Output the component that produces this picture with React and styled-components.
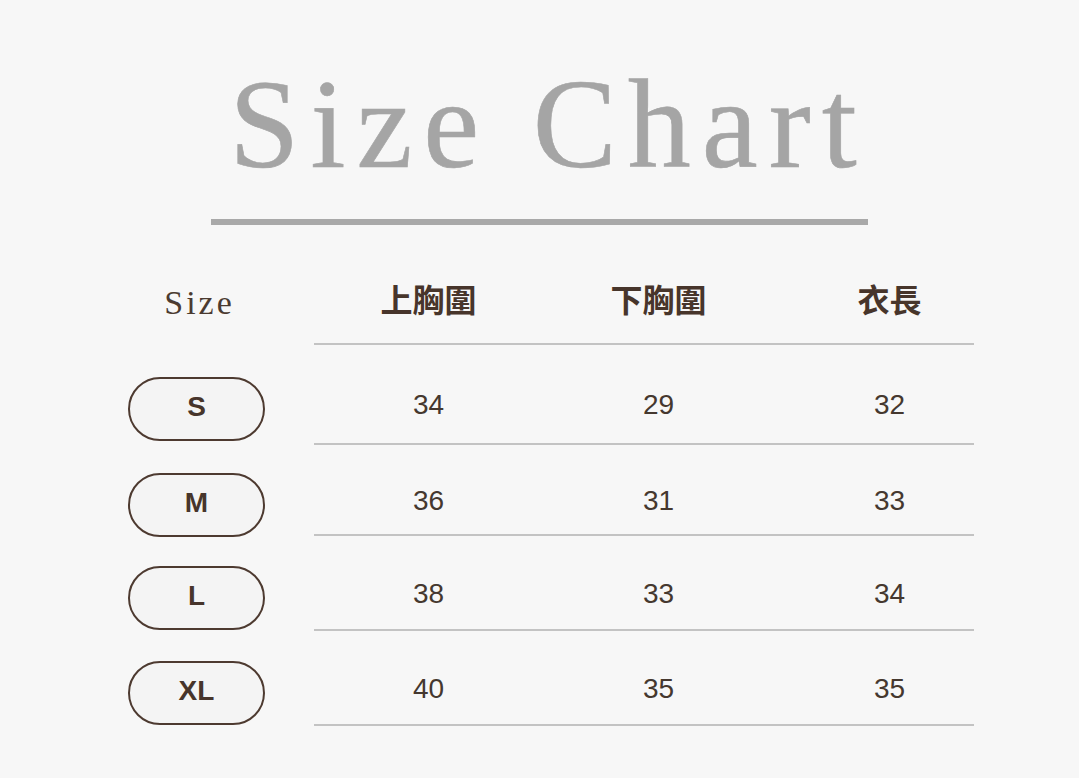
import React from "react";
import styled, { createGlobalStyle } from "styled-components";

const rows = [
  { size: "S", values: [34, 29, 32], h: 100 },
  { size: "M", values: [36, 31, 33], h: 91 },
  { size: "L", values: [38, 33, 34], h: 95 },
  { size: "XL", values: [40, 35, 35], h: 95 },
];

const headers = ["上胸圍", "下胸圍", "衣長"];

const App = () => {
  return (
    <Page>
      <GlobalStyle />
      <Title>Size Chart</Title>
      <TitleBar />
      <Table>
        <HeadRow>
          <SizeHead>Size</SizeHead>
          <DataGroup>
            {headers.map((h) => (
              <HeadCell key={h}>{h}</HeadCell>
            ))}
          </DataGroup>
        </HeadRow>
        {rows.map((row) => (
          <Row key={row.size} $h={row.h}>
            <SizeCell>
              <Pill>{row.size}</Pill>
            </SizeCell>
            <DataGroup>
              {row.values.map((v, i) => (
                <NumCell key={i}>{v}</NumCell>
              ))}
            </DataGroup>
          </Row>
        ))}
      </Table>
    </Page>
  );
};

export default App;

const GlobalStyle = createGlobalStyle`
  html, body {
    margin: 0;
    padding: 0;
    background: #f7f7f7;
  }
  body {
    font-family: "Liberation Sans", Arial, sans-serif;
  }
`;

const Page = styled.div`
  width: 1079px;
  height: 778px;
  padding-top: 62px;
  box-sizing: border-box;
  background: #f7f7f7;
  overflow: hidden;
`;

const Title = styled.h1`
  margin: 0;
  padding-left: 18px;
  text-align: center;
  font-family: "Liberation Serif", "Times New Roman", serif;
  font-weight: 400;
  font-size: 126px;
  line-height: 1;
  letter-spacing: 11px;
  color: #a5a5a5;
  -webkit-text-stroke: 0.6px #a5a5a5;
`;

const TitleBar = styled.div`
  width: 657px;
  height: 6px;
  margin: 31px auto 0;
  background: #a9a9a9;
`;

const Table = styled.div`
  margin: 32px 0 0 81px;
  display: flex;
  flex-direction: column;
`;

const HeadRow = styled.div`
  display: flex;
  height: 88px;
`;

const Row = styled.div`
  display: flex;
  height: ${(p) => p.$h}px;
`;

const SizeHead = styled.div`
  width: 231px;
  flex-shrink: 0;
  display: flex;
  align-items: center;
  justify-content: center;
  padding: 3px 0 0 6px;
  box-sizing: border-box;
  font-family: "Liberation Serif", "Times New Roman", serif;
  font-size: 34px;
  line-height: 1;
  letter-spacing: 3px;
  color: #4b3b31;
`;

const SizeCell = styled.div`
  width: 231px;
  flex-shrink: 0;
  display: flex;
  align-items: center;
  justify-content: center;
  padding: 28px 0 0;
  box-sizing: border-box;
`;

const Pill = styled.div`
  width: 137px;
  height: 64px;
  box-sizing: border-box;
  border: 2px solid #4d3a30;
  border-radius: 32px;
  background: #f4f4f4;
  display: flex;
  align-items: center;
  justify-content: center;
  padding-bottom: 4px;
  font-family: "Liberation Sans", Arial, sans-serif;
  font-weight: 700;
  font-size: 28px;
  color: #47352b;
`;

const DataGroup = styled.div`
  width: 660px;
  margin-left: 2px;
  box-sizing: border-box;
  border-bottom: 2px solid #c3c3c3;
  display: grid;
  grid-template-columns: 229px 231px 231px;
`;

const HeadCell = styled.div`
  display: flex;
  align-items: center;
  justify-content: center;
  padding-bottom: 4px;
  font-family: "Noto Sans CJK TC", "Noto Sans CJK SC", sans-serif;
  font-weight: 700;
  font-size: 32px;
  line-height: 1;
  color: #47352b;
`;

const NumCell = styled.div`
  display: flex;
  align-items: center;
  justify-content: center;
  padding-top: 22px;
  font-family: "Liberation Sans", Arial, sans-serif;
  font-size: 28px;
  color: #45382f;
`;
